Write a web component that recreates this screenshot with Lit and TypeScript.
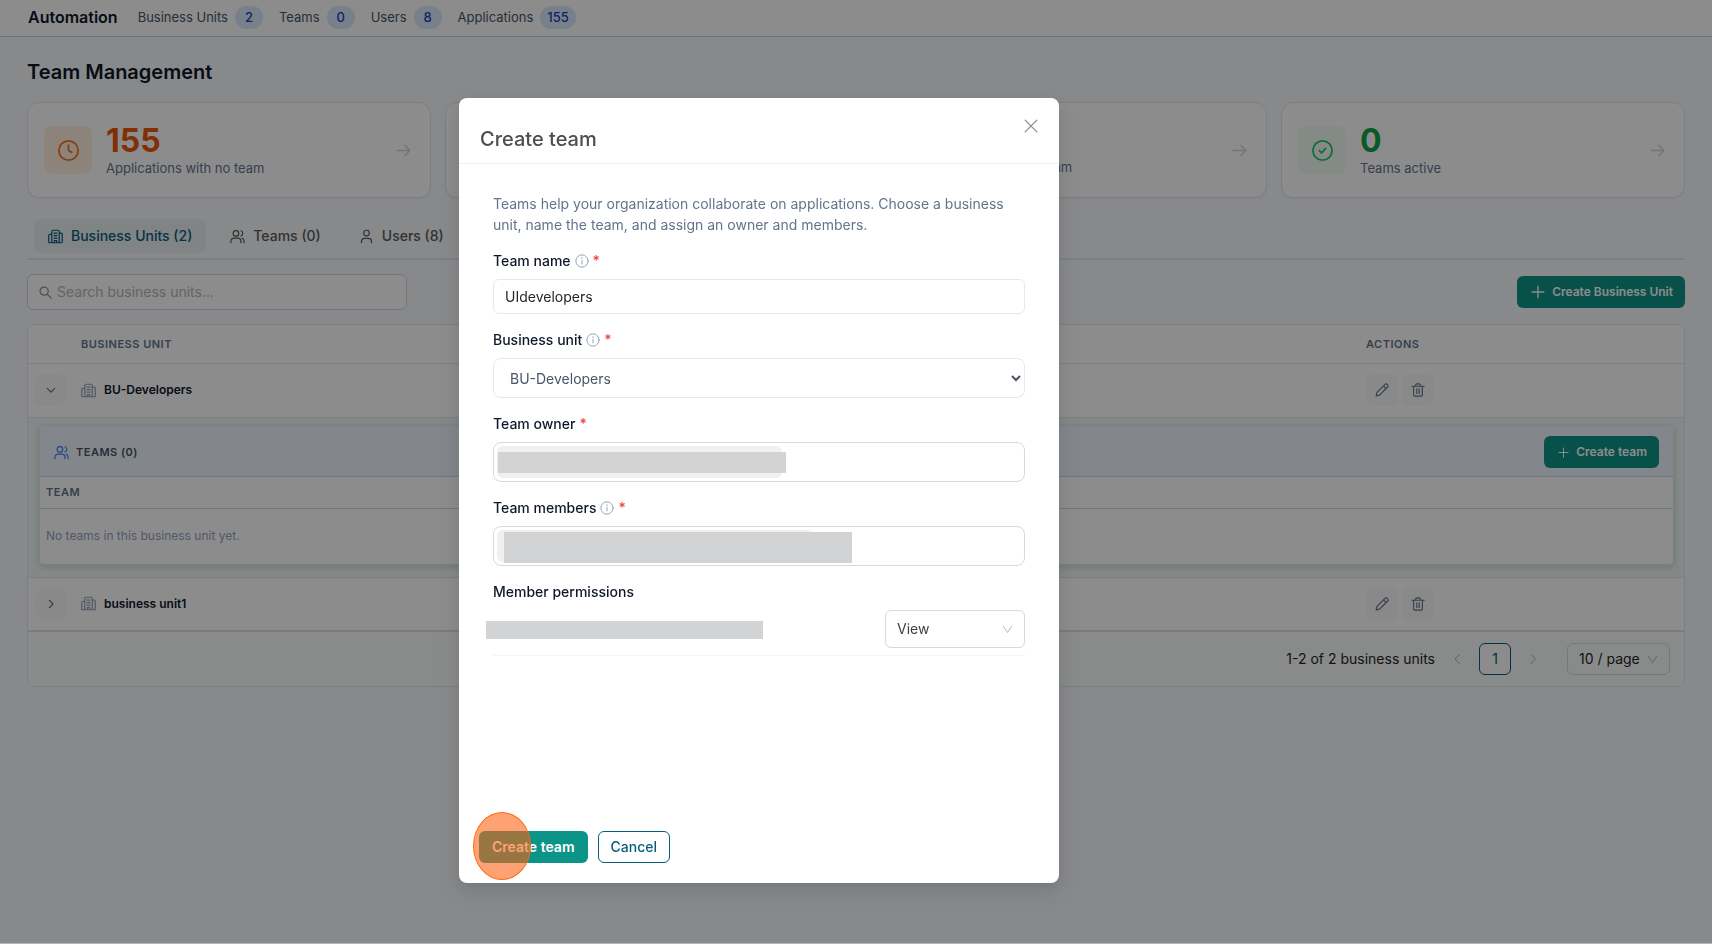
import { LitElement, html, css, svg, nothing, TemplateResult } from "lit";
import { customElement, state } from "lit/decorators.js";
import { classMap } from "lit/directives/class-map.js";

type Stat = { value?: number; label?: string; tone: string; icon: string };

const paths: Record<string, unknown> = {
  clock: svg`<circle cx="12" cy="12" r="9.2"/><path d="M12 6.800V12l3.200 1.800"/>`,
  check: svg`<circle cx="12" cy="12" r="9.2"/><path d="M9 12.200l2 2 4-4.200"/>`,
  arrow: svg`<path d="M3 12h18M14 5l7 7-7 7"/>`,
  building: svg`<path d="M6 22V4a2 2 0 0 1 2-2h8a2 2 0 0 1 2 2v18M6 22H3a1.800 1.800 0 0 1-1.800-1.800V10.500A2 2 0 0 1 3.200 8.500H6M18 22h3a1.800 1.800 0 0 0 1.800-1.800V8.500a2 2 0 0 0-2-2H18M1.500 22h21M9.500 6.500h5M9.500 10.500h5M9.500 14.500h5M10 22v-3.500h4V22"/>`,
  users: svg`<circle cx="9.500" cy="7" r="4.500"/><path d="M1.500 22v-2.500a5 5 0 0 1 5-5h6a5 5 0 0 1 5 5V22M17.500 2.800a4.500 4.500 0 0 1 0 8.400M22.500 22v-2.500a5 5 0 0 0-3-4.600"/>`,
  user: svg`<circle cx="12" cy="6.500" r="4.500"/><path d="M4 22v-2a5 5 0 0 1 5-5h6a5 5 0 0 1 5 5v2"/>`,
  search: svg`<circle cx="9.500" cy="9.500" r="7.500"/><path d="M15 15l7.500 7.500"/>`,
  plus: svg`<path d="M12 2v20M2 12h20"/>`,
  down: svg`<path d="M3 8l9 9 9-9"/>`,
  right: svg`<path d="M8 3l9 9-9 9"/>`,
  left: svg`<path d="M17 3l-9 9 9 9"/>`,
  vee: svg`<path d="M2.500 4.500L12 18.500l9.500-14"/>`,
  close: svg`<path d="M2 2l20 20M22 2L2 22"/>`,
  pencil: svg`<path d="M2 22l1.300-5.800L17.200 2.300a2.600 2.600 0 0 1 3.700 0l.8.800a2.600 2.600 0 0 1 0 3.700L7.800 20.700 2 22zM14.500 5l4.500 4.500"/>`,
  trash: svg`<path d="M1.500 5.500h21M4.500 5.500V20.500A2 2 0 0 0 6.500 22.500h11a2 2 0 0 0 2-2V5.500M8 5.500V3.500a2 2 0 0 1 2-2h4a2 2 0 0 1 2 2v2M10 10v8M14 10v8"/>`,
  info: svg`<circle cx="12" cy="12" r="10.500"/><path d="M12 11v6M12 6.500v1.500"/>`,
};

const icon = (name: string, size = 14, weight = 2): TemplateResult => html`<svg
  width=${size}
  height=${size}
  viewBox="0 0 24 24"
  fill="none"
  stroke="currentColor"
  stroke-width=${weight}
  stroke-linecap="round"
  stroke-linejoin="round"
  aria-hidden="true"
>${paths[name]}</svg>`;

@customElement("app-root")
export class AppRoot extends LitElement {
  @state() private tab = 0;
  @state() private open = true;

  private counts = [
    { label: "Business Units", n: 2 },
    { label: "Teams", n: 0 },
    { label: "Users", n: 8 },
    { label: "Applications", n: 155 },
  ];

  private stats: Stat[] = [
    { value: 155, label: "Applications with no team", tone: "orange", icon: "clock" },
    { tone: "orange", icon: "building" },
    { label: "Users without a team", tone: "orange", icon: "users" },
    { value: 0, label: "Teams active", tone: "green", icon: "check" },
  ];

  private tabs = [
    { label: "Business Units (2)", icon: "building" },
    { label: "Teams (0)", icon: "users" },
    { label: "Users (8)", icon: "user" },
  ];

  static styles = css`
    :host {
      display: block;
      min-height: 100vh;
      background: #f8fafc;
      color: #0f172a;
      font: 14px/20px Inter, "Liberation Sans", sans-serif;
    }
    * { box-sizing: border-box; }
    button, input, select { font: inherit; color: inherit; margin: 0; }
    button { cursor: pointer; border: 0; background: none; padding: 0; }
    svg { display: block; flex: none; }
    h1, h2, p { margin: 0; }

    .topbar {
      display: flex;
      align-items: center;
      gap: 20px;
      height: 37px;
      padding: 0 28px 2px;
      background: #fff;
      border-bottom: 1px solid #cbd5e1;
    }
    .brand { font-size: 16px; font-weight: 600; }
    .counts { display: flex; gap: 16px; }
    .count {
      display: flex;
      align-items: center;
      gap: 7px;
      color: #475569;
      font-size: 13px;
      text-decoration: none;
    }
    .badge {
      min-width: 28px;
      padding: 0 7px;
      border-radius: 12px;
      background: #dbeafe;
      color: #1e40af;
      font-weight: 500;
      line-height: 23px;
      text-align: center;
    }

    main { padding: 21px 27px; }
    h1 { font-size: 20px; font-weight: 600; line-height: 28px; }

    .stats {
      display: grid;
      grid-template-columns: repeat(4, 1fr);
      gap: 14px;
      margin-top: 16px;
    }
    .stat {
      display: flex;
      align-items: center;
      gap: 14px;
      height: 96px;
      padding: 0 18px 0 16px;
      background: #fff;
      border: 1px solid #e2e8f0;
      border-radius: 12px;
      box-shadow: 0 1px 2px rgba(15, 23, 42, 0.06);
      text-align: left;
    }
    .tile {
      display: grid;
      place-items: center;
      width: 48px;
      height: 48px;
      border-radius: 8px;
    }
    .orange .tile { background: #fff1e0; color: #f97316; }
    .green .tile { background: #f0fdf4; color: #22c55e; }
    .orange .value { color: #ea580c; }
    .green .value { color: #16a34a; }
    .figures { flex: 1; display: flex; flex-direction: column; }
    .value { min-height: 34px; padding-top: 1px; font-size: 32px; font-weight: 700; line-height: 34px; }
    .caption { color: #64748b; font-size: 13px; line-height: 20px; }
    .go { color: #cbd5e1; }

    .tabs {
      display: flex;
      gap: 10px;
      margin-top: 21px;
      padding: 0 7px 5px;
      border-bottom: 2px solid #e2e8f0;
    }
    .tab {
      display: flex;
      align-items: center;
      gap: 8px;
      height: 34px;
      padding: 0 14px;
      border-radius: 6px;
      color: #595959;
      font-weight: 500;
    }
    .tab.on { background: #e9f1f1; color: #075e7c; }

    .tools {
      display: flex;
      align-items: center;
      justify-content: space-between;
      margin: 14px 0;
    }
    .search {
      display: flex;
      align-items: center;
      gap: 5px;
      width: 380px;
      height: 36px;
      padding: 0 11px;
      border: 1px solid #cfd6de;
      border-radius: 6px;
      background: #fff;
      color: #8a8f98;
    }
    .search input {
      flex: 1;
      min-width: 0;
      border: 0;
      padding: 0;
      outline: 0;
      background: none;
    }
    .search input::placeholder { color: #b4b8be; opacity: 1; }

    .primary {
      display: inline-flex;
      align-items: center;
      justify-content: center;
      gap: 7px;
      height: 32px;
      padding: 0 13px;
      border-radius: 6px;
      background: #0d9488;
      color: #fff;
      font-size: 14px;
      font-weight: 600;
    }
    .primary.wide { padding: 0 12px 0 14px; font-size: 12px; }

    .panel {
      background: #fff;
      border: 1px solid #e2e8f0;
      border-radius: 8px;
      overflow: hidden;
    }
    table { width: 100%; border-collapse: collapse; table-layout: fixed; }
    th {
      color: #64748b;
      font-size: 11px;
      font-weight: 600;
      letter-spacing: 0.5px;
      text-align: left;
      text-transform: uppercase;
    }
    .units > thead th { height: 38px; padding: 0 16px; border-bottom: 1px solid #e2e8f0; }
    .units .c-toggle { width: 37px; }
    .units .c-actions { width: 334px; }
    .unit td { height: 54px; padding: 0 16px; border-bottom: 1px solid #e2e8f0; }
    .unit td.toggle { padding: 0 0 0 7px; }
    .unit.last td { border-bottom: 2px solid #dbe0ea; }
    .name {
      display: flex;
      align-items: center;
      gap: 8px;
      font-size: 12px;
      font-weight: 600;
    }
    .name svg { color: #94a3b8; }
    .square {
      display: inline-grid;
      place-items: center;
      width: 32px;
      height: 32px;
      border-radius: 8px;
      background: #fafafa;
      color: #64748b;
      vertical-align: middle;
    }
    .actions { display: flex; gap: 4px; }
    .nest { padding: 7px 10px 12px 11px; background: #f0f8f5; border-bottom: 1px solid #dbe7ea; }
    .teams {
      border: 1px solid #e2e8f0;
      border-radius: 4px;
      background: #fff;
      box-shadow: 0 2px 6px rgba(15, 23, 42, 0.14);
      overflow: hidden;
    }
    .teams-head {
      display: flex;
      align-items: center;
      justify-content: space-between;
      height: 51px;
      padding: 3px 14px 0;
      background: #eff6ff;
      border-bottom: 1px solid #bfdbfe;
    }
    .teams-title {
      display: flex;
      align-items: center;
      gap: 7px;
      color: #475569;
      font-size: 11px;
      font-weight: 600;
      letter-spacing: 0.5px;
    }
    .teams-title svg { color: #3b82f6; }
    .teams th { height: 32px; padding: 0 6px; border-bottom: 1px solid #c7dbf7; }
    .teams td { height: 55px; padding: 0 6px; color: #94a3b8; font-size: 12px; }

    .pager {
      display: flex;
      align-items: center;
      justify-content: flex-end;
      height: 54px;
      padding: 0 14px;
      background: #f9fcfb;
      color: #262626;
    }
    .step { padding: 0 16px; color: #a3a8b0; }
    .page {
      width: 32px;
      height: 32px;
      border: 1px solid #075e7c;
      border-radius: 6px;
      background: #fff;
      color: #075e7c;
    }
    .pick { position: relative; display: inline-flex; align-items: center; }
    .pick select {
      appearance: none;
      width: 100%;
      height: 100%;
      padding: 0 11px;
      border: 1px solid #d9d9d9;
      border-radius: 6px;
      background: transparent;
      outline: 0;
    }
    .pick svg { position: absolute; right: 12px; color: #b4b4b4; pointer-events: none; }
    .pick.size { width: 103px; height: 32px; margin-left: 12px; }

    .veil {
      position: fixed;
      inset: 0;
      z-index: 10;
      display: flex;
      justify-content: center;
      padding: 98px 194px 60px 0;
      background: rgba(0, 0, 0, 0.45) padding-box;
      border-bottom: 1px solid rgba(0, 0, 0, 0.28);
    }
    .modal {
      display: flex;
      flex-direction: column;
      width: 600px;
      background: #fff;
      border-radius: 8px;
      box-shadow: 0 6px 16px rgba(0, 0, 0, 0.08), 0 3px 6px -4px rgba(0, 0, 0, 0.12),
        0 9px 28px 8px rgba(0, 0, 0, 0.05);
    }
    .modal header {
      display: flex;
      justify-content: space-between;
      padding: 20px 20px 10px 21px;
      border-bottom: 1px solid #f0f0f0;
    }
    h2 { padding-top: 7px; color: #4d4d4d; font-size: 20px; font-weight: 500; line-height: 28px; }
    .close { align-self: flex-start; color: #8c8c8c; padding: 1px; }
    form { flex: 1; display: flex; flex-direction: column; }
    .fields { flex: 1; padding: 29px 34px 0; }
    .intro { color: #64748b; line-height: 21px; }
    .label {
      display: flex;
      align-items: center;
      gap: 4px;
      margin-top: 16px;
      padding-bottom: 8px;
      line-height: 20px;
      font-weight: 500;
      color: #0f172a;
    }
    .label svg { color: #94a3b8; }
    .req { color: #ef4444; }
    .text {
      display: block;
      width: 100%;
      height: 35px;
      padding: 0 11px;
      border: 1px solid #e2e8f0;
      border-radius: 6px;
      outline: 0;
      background: #fff;
      color: #262626;
    }
    .native {
      display: block;
      width: 100%;
      height: 40px;
      padding: 0 0 0 12px;
      border: 1px solid #e2e8f0;
      border-radius: 8px;
      background: #fff;
      color: #475569;
      outline: 0;
    }
    .tags {
      display: flex;
      align-items: center;
      height: 40px;
      padding: 0 3px;
      border: 1px solid #d9d9d9;
      border-radius: 8px;
    }
    .tags input { flex: 1; min-width: 0; height: 32px; border: 0; outline: 0; background: none; }
    .chip { position: relative; height: 32px; border-radius: 6px; background: #f0f0f0; }
    .chip.one { width: 285px; }
    .chip.many { width: 317px; }
    .mask { display: block; background: #d1d3d4; }
    .chip .mask { position: absolute; }
    .one .mask { inset: 6px -4px 5px 1px; }
    .many .mask { inset: 2px -38px -1px 7px; }
    .member {
      display: flex;
      align-items: center;
      justify-content: space-between;
      padding-bottom: 7px;
      border-bottom: 1px solid #f1f5f9;
    }
    .who { width: 277px; height: 18px; margin: 2px 0 0 -7px; }
    .pick.perm { width: 140px; height: 38px; color: #404040; }

    footer { display: flex; gap: 10px; padding: 0 20px 20px; }
    .press { position: relative; display: flex; }
    .ghost {
      height: 32px;
      padding: 0 12px;
      border: 1px solid #075e7c;
      border-radius: 6px;
      background: #fff;
      color: #075e7c;
      font-weight: 500;
    }
    .ripple {
      position: absolute;
      left: -6px;
      top: -19px;
      width: 58px;
      height: 68px;
      border: 1px solid #ff6a13;
      border-radius: 50%;
      background: rgba(255, 94, 14, 0.58);
      pointer-events: none;
    }
  `;

  private label(text: string, id: string, info = false, required = true) {
    return html`<label class="label" for=${id}>
      ${text}${info ? icon("info", 14, 1.7) : nothing}${required ? html`<span class="req">*</span>` : nothing}
    </label>`;
  }

  private unit(name: string, expanded: boolean, last = false) {
    return html`<tr class=${classMap({ unit: true, last })}>
      <td class="toggle">
        <button class="square" aria-label="Toggle ${name}" aria-expanded=${expanded}>
          ${icon(expanded ? "down" : "right", 10, 2.8)}
        </button>
      </td>
      <td><span class="name">${icon("building", 15, 1.9)}${name}</span></td>
      <td>
        <div class="actions">
          <button class="square" aria-label="Edit ${name}">${icon("pencil", 14)}</button>
          <button class="square" aria-label="Delete ${name}">${icon("trash", 14)}</button>
        </div>
      </td>
    </tr>`;
  }

  private dialog() {
    return html`<div class="veil">
      <section class="modal" role="dialog" aria-modal="true" aria-labelledby="title">
        <header>
          <h2 id="title">Create team</h2>
          <button class="close" aria-label="Close" @click=${() => (this.open = false)}>
            ${icon("close", 14, 2.2)}
          </button>
        </header>
        <form @submit=${(e: Event) => e.preventDefault()}>
          <div class="fields">
            <p class="intro">
              Teams help your organization collaborate on applications. Choose a business unit, name
              the team, and assign an owner and members.
            </p>
            ${this.label("Team name", "team", true)}
            <input class="text" id="team" value="UIdevelopers" />
            ${this.label("Business unit", "bu", true)}
            <select class="native" id="bu"><option>BU-Developers</option></select>
            ${this.label("Team owner", "owner")}
            <div class="tags">
              <span class="chip one"><span class="mask"></span></span><input id="owner" />
            </div>
            ${this.label("Team members", "members", true)}
            <div class="tags">
              <span class="chip many"><span class="mask"></span></span><input id="members" />
            </div>
            ${this.label("Member permissions", "perm", false, false)}
            <div class="member">
              <span class="mask who"></span>
              <span class="pick perm">
                <select id="perm"><option>View</option></select>${icon("vee", 11, 2)}
              </span>
            </div>
          </div>
          <footer>
            <span class="press">
              <button class="primary" type="submit">Create team</button>
              <span class="ripple"></span>
            </span>
            <button class="ghost" type="button" @click=${() => (this.open = false)}>Cancel</button>
          </footer>
        </form>
      </section>
    </div>`;
  }

  render() {
    return html`
      <nav class="topbar">
        <span class="brand">Automation</span>
        <div class="counts">
          ${this.counts.map(
            (c) => html`<a class="count" href="#">${c.label}<span class="badge">${c.n}</span></a>`
          )}
        </div>
      </nav>
      <main>
        <h1>Team Management</h1>
        <div class="stats">
          ${this.stats.map(
            (s) => html`<button class="stat ${s.tone}">
              <span class="tile">${icon(s.icon, 25, 1.7)}</span>
              <span class="figures">
                <span class="value">${s.value ?? nothing}</span>
                <span class="caption">${s.label ?? nothing}</span>
              </span>
              <span class="go">${icon("arrow", 17, 2)}</span>
            </button>`
          )}
        </div>
        <div class="tabs" role="tablist">
          ${this.tabs.map(
            (t, i) => html`<button
              role="tab"
              class=${classMap({ tab: true, on: i === this.tab })}
              aria-selected=${i === this.tab}
              @click=${() => (this.tab = i)}
            >${icon(t.icon, 15, 1.9)}${t.label}</button>`
          )}
        </div>
        <div class="tools">
          <label class="search">
            ${icon("search", 13, 2.2)}
            <input type="search" aria-label="Search business units" placeholder="Search business units..." />
          </label>
          <button class="primary wide">${icon("plus", 14, 2.4)}Create Business Unit</button>
        </div>
        <div class="panel">
          <table class="units">
            <colgroup><col class="c-toggle" /><col /><col class="c-actions" /></colgroup>
            <thead><tr><th></th><th>Business unit</th><th>Actions</th></tr></thead>
            <tbody>
              ${this.unit("BU-Developers", true)}
              <tr>
                <td colspan="3" class="nest">
                  <div class="teams">
                    <div class="teams-head">
                      <span class="teams-title">${icon("users", 15, 1.9)}TEAMS (0)</span>
                      <button class="primary wide">${icon("plus", 11, 2.2)}Create team</button>
                    </div>
                    <table>
                      <thead><tr><th>Team</th></tr></thead>
                      <tbody><tr><td>No teams in this business unit yet.</td></tr></tbody>
                    </table>
                  </div>
                </td>
              </tr>
              ${this.unit("business unit1", false, true)}
            </tbody>
          </table>
          <div class="pager">
            <span>1-2 of 2 business units</span>
            <button class="step" aria-label="Previous page">${icon("left", 12, 1.8)}</button>
            <button class="page">1</button>
            <button class="step" aria-label="Next page">${icon("right", 12, 1.8)}</button>
            <span class="pick size">
              <select aria-label="Page size"><option>10 / page</option></select>${icon("vee", 11, 2)}
            </span>
          </div>
        </div>
      </main>
      ${this.open ? this.dialog() : nothing}
    `;
  }
}
